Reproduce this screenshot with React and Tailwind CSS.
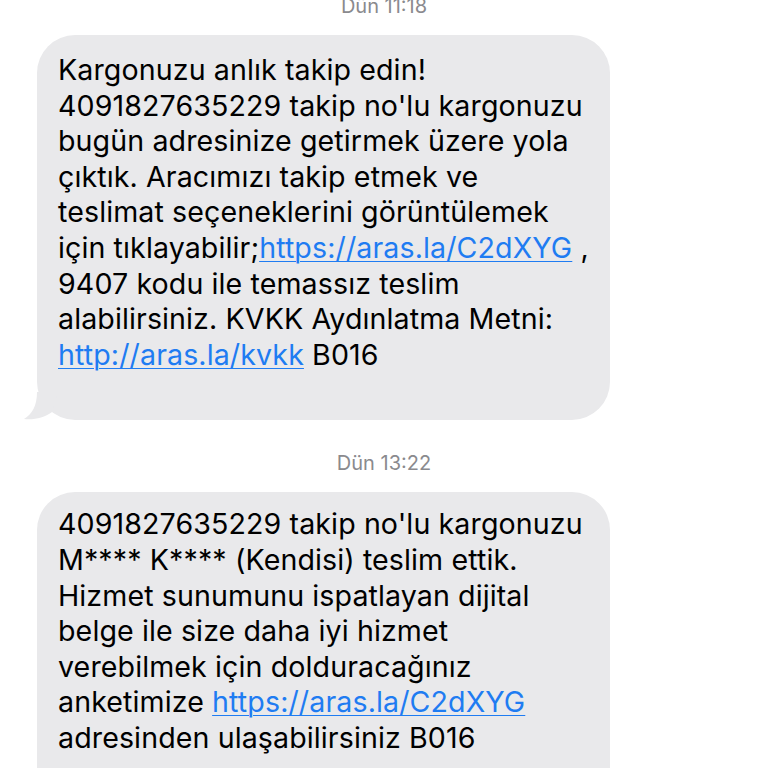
import React from "react";

const font = { fontFamily: "Inter, 'Noto Sans', sans-serif" };

function Link({ children }) {
  return <span className="text-[#1f7cf2] underline decoration-1 underline-offset-[3px]">{children}</span>;
}

function Tail() {
  return (
    <svg
      className="absolute left-[-13px] bottom-0"
      width="34"
      height="28"
      viewBox="0 0 34 28"
    >
      <path d="M13 0 C13 14 8 22 0 27 C10 28 20 26 28 20 L34 0 Z" fill="#e9e9eb" />
    </svg>
  );
}

function Bubble({ lines, className }) {
  return (
    <div className={`relative ml-[37px] w-[573px] rounded-[38px] bg-[#e9e9eb] pl-[21px] pr-4 ${className}`}>
      <Tail />
      <div className="text-[28.6px] leading-[35.6px] text-black tracking-[0.1px]">
        {lines.map((l, i) => (
          <div key={i} className="whitespace-nowrap">{l}</div>
        ))}
      </div>
    </div>
  );
}

export default function App() {
  const first = [
    "Kargonuzu anlık takip edin!",
    "4091827635229 takip no'lu kargonuzu",
    "bugün adresinize getirmek üzere yola",
    "çıktık. Aracımızı takip etmek ve",
    "teslimat seçeneklerini görüntülemek",
    <>için tıklayabilir;<Link>https://aras.la/C2dXYG</Link> ,</>,
    "9407 kodu ile temassız teslim",
    "alabilirsiniz. KVKK Aydınlatma Metni:",
    <><Link>http://aras.la/kvkk</Link> B016</>,
  ];
  const second = [
    "4091827635229 takip no'lu kargonuzu",
    "M**** K**** (Kendisi) teslim ettik.",
    "Hizmet sunumunu ispatlayan dijital",
    "belge ile size daha iyi hizmet",
    "verebilmek için dolduracağınız",
    <>anketimize <Link>https://aras.la/C2dXYG</Link></>,
    "adresinden ulaşabilirsiniz B016",
  ];
  return (
    <div className="w-[768px] h-[768px] overflow-hidden bg-white" style={font}>
      <div className="mt-[-5px] h-[22px] text-center text-[20px] leading-[22px] text-[#8a8a8e]">
        Dün 11:18
      </div>
      <Bubble lines={first} className="mt-[18px] pt-[17px] pb-[48px]" />
      <div className="mt-[32px] h-[22px] text-center text-[20px] leading-[22px] text-[#8a8a8e]">Dün 13:22</div>
      <Bubble lines={second} className="mt-[18px] pt-[14px] pb-[48px]" />
    </div>
  );
}
